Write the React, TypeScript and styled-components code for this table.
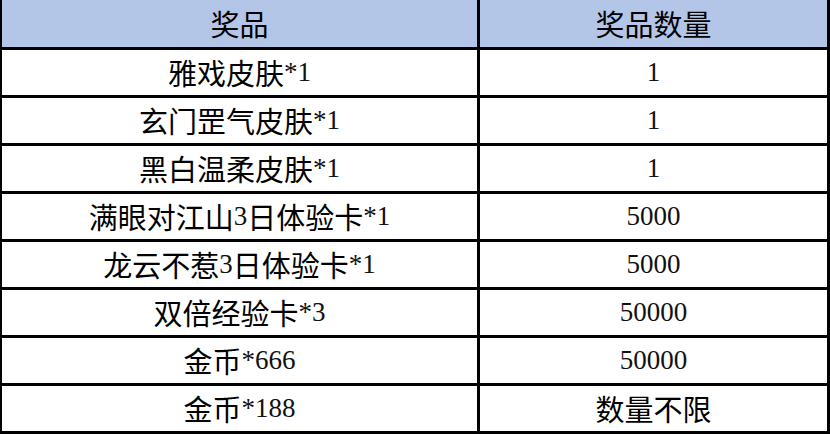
import React from 'react';
import styled, { createGlobalStyle } from 'styled-components';

const GlobalStyle = createGlobalStyle`
  html, body {
    margin: 0;
    padding: 0;
    background: #ffffff;
  }
`;

const Table = styled.div`
  width: 830px;
  height: 434px;
  box-sizing: border-box;
  display: grid;
  grid-template-columns: 478px 1fr;
  grid-template-rows: 50px repeat(8, 48px);
  border-left: 2px solid #000;
  border-right: 3px solid #000;
  font-family: 'Liberation Serif', 'Noto Sans CJK SC', serif;
  font-size: 27px;
  color: #111;
`;

const Cell = styled.div<{ $head?: boolean; $left?: boolean }>`
  display: flex;
  align-items: center;
  justify-content: center;
  box-sizing: border-box;
  border-bottom: 3px solid #000;
  border-right: ${(p) => (p.$left ? '3px solid #000' : 'none')};
  background: ${(p) => (p.$head ? '#b4c6e7' : '#fff')};
  line-height: 1;
  white-space: nowrap;
`;

const Han = styled.span`
  font-family: 'Noto Sans CJK SC', sans-serif;
  font-size: 29px;
  color: #000;
`;

// CJK runs are set a little larger than the latin digits, as in the source sheet
function Text({ value }: { value: string }) {
  const parts = value.split(/([\u4e00-\u9fff]+)/).filter(Boolean);
  return (
    <>
      {parts.map((part, i) =>
        /[\u4e00-\u9fff]/.test(part) ? <Han key={i}>{part}</Han> : <span key={i}>{part}</span>
      )}
    </>
  );
}

const rows: [string, string][] = [
  ['雅戏皮肤*1', '1'],
  ['玄门罡气皮肤*1', '1'],
  ['黑白温柔皮肤*1', '1'],
  ['满眼对江山3日体验卡*1', '5000'],
  ['龙云不惹3日体验卡*1', '5000'],
  ['双倍经验卡*3', '50000'],
  ['金币*666', '50000'],
  ['金币*188', '数量不限'],
];

export default function App() {
  return (
    <>
      <GlobalStyle />
      <Table>
        <Cell $head $left><Text value="奖品" /></Cell>
        <Cell $head><Text value="奖品数量" /></Cell>
        {rows.map(([name, count]) => (
          <React.Fragment key={name}>
            <Cell $left><Text value={name} /></Cell>
            <Cell><Text value={count} /></Cell>
          </React.Fragment>
        ))}
      </Table>
    </>
  );
}
